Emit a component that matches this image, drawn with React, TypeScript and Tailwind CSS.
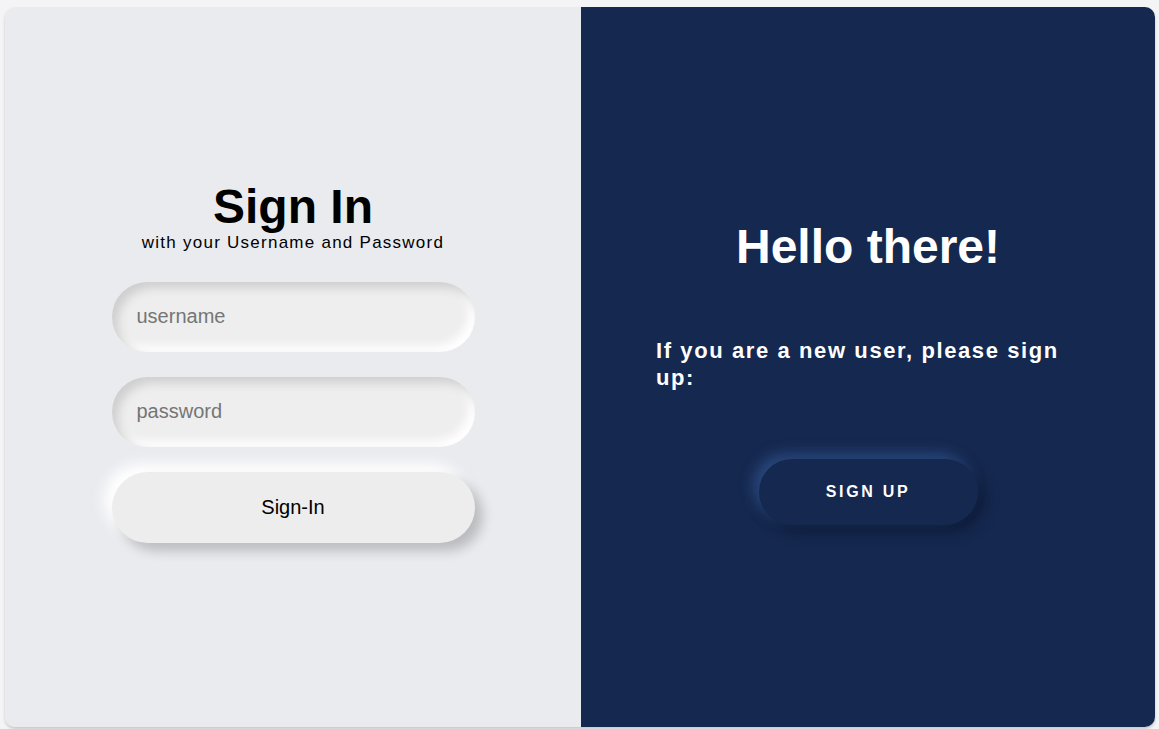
export default function App() {
    return (
        <div className="h-screen w-full bg-[#f4f4f6] pt-[7px] pl-[5px]" style={{ fontFamily: '"Liberation Sans", Arial, sans-serif' }}>
            <div className="flex w-[1150px] h-[720px] rounded-[10px] overflow-hidden shadow-[0_2px_3px_rgba(0,0,0,0.18)]">
                <section className="w-[576px] h-full bg-[#eaebef] flex flex-col items-center justify-center pb-[10px]">
                    <h1 className="text-[48px] font-bold leading-[50px] text-black">Sign In</h1>
                    <p className="mt-[1px] text-[17px] tracking-[1.25px] text-black leading-[20px]">with your Username and Password</p>
                    <form className="mt-[29px] flex flex-col gap-[25px] w-[363px]">
                        <input
                            type="text"
                            placeholder="username"
                            className="h-[70px] w-full rounded-full bg-[#eeeeee] pl-[25px] text-[20px] outline-none placeholder:text-[#757575] shadow-[inset_6px_6px_10px_#cfcfcf,inset_-6px_-6px_10px_#ffffff]"
                        />
                        <input
                            type="password"
                            placeholder="password"
                            className="h-[70px] w-full rounded-full bg-[#eeeeee] pl-[25px] text-[20px] outline-none placeholder:text-[#757575] shadow-[inset_6px_6px_10px_#cfcfcf,inset_-6px_-6px_10px_#ffffff]"
                        />
                        <button
                            type="button"
                            className="h-[71px] w-full rounded-full bg-[#ededed] text-[20px] text-black shadow-[8px_8px_12px_rgba(0,0,0,0.2),-8px_-8px_14px_#ffffff]"
                        >
                            Sign-In
                        </button>
                    </form>
                </section>
                <section className="flex-1 h-full bg-[#15284f] flex flex-col items-center px-[75px] pt-[212px]">
                    <h2 className="text-[48px] font-bold leading-[55px] text-white">Hello there!</h2>
                    <p className="mt-[63px] w-full text-[22px] font-bold tracking-[1.6px] leading-[27px] text-white">If you are a new user, please sign up:</p>
                    <button
                        type="button"
                        className="mt-[68px] h-[66px] w-[219px] rounded-full bg-[#15284f] text-[16px] font-bold tracking-[2.7px] text-white shadow-[-6px_-6px_14px_rgba(66,110,180,0.45),6px_6px_14px_rgba(8,18,40,0.6)]"
                    >
                        SIGN UP
                    </button>
                </section>
            </div>
        </div>
    )
}
